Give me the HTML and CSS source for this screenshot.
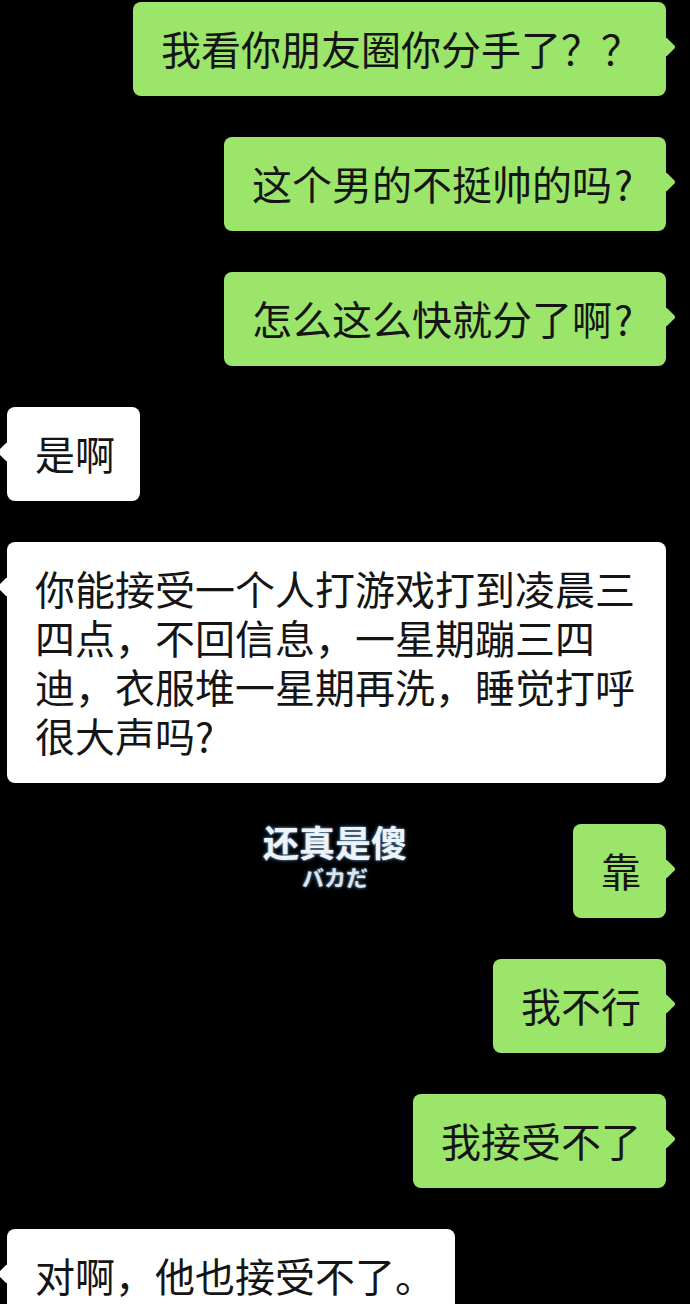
FILE: index.html
```html
<!DOCTYPE html>
<html>
<head>
  <meta charset="utf-8">
  <title>Chat</title>
  <link rel="stylesheet" href="styles.css">
</head>
<body>
  <div class="chat">
    <div class="row me">
      <div class="bubble green">我看你朋友圈你分手了？？</div>
    </div>
    <div class="row me">
      <div class="bubble green">这个男的不挺帅的吗<span class="q">?</span></div>
    </div>
    <div class="row me">
      <div class="bubble green">怎么这么快就分了啊<span class="q">?</span></div>
    </div>

    <div class="row them">
      <div class="bubble white">是啊</div>
    </div>
    <div class="row them">
      <div class="bubble white">你能接受一个人打游戏打到凌晨三四点，不回信息，一星期蹦三四迪，衣服堆一星期再洗，睡觉打呼很大声吗?</div>
    </div>

    <div class="row split">
      <div class="sticker">
        <span class="sticker-big">还真是傻</span>
        <span class="sticker-small">バカだ</span>
      </div>
      <div class="bubble green">靠</div>
    </div>
    <div class="row me">
      <div class="bubble green">我不行</div>
    </div>
    <div class="row me">
      <div class="bubble green">我接受不了</div>
    </div>

    <div class="row them">
      <div class="bubble white last">对啊，他也接受不了。</div>
    </div>
  </div>
</body>
</html>
```

FILE: styles.css
```css
body {
  margin: 0;
  background: #000;
  font-family: "Noto Sans CJK SC", "Noto Sans", sans-serif;
  overflow: hidden;
}

.chat {
  display: flex;
  flex-direction: column;
  gap: 41px;
  padding: 2px 24px 0 7px;
}

.row {
  display: flex;
}

.row.me {
  justify-content: flex-end;
}

.row.them {
  justify-content: flex-start;
}

.row.split {
  justify-content: space-between;
  align-items: flex-start;
}

.bubble {
  position: relative;
  font-size: 40px;
  line-height: 49px;
  padding: 22px 25px 23px 28px;
  border-radius: 8px;
  color: #151515;
  max-width: 610px;
}

.bubble .q {
  margin: 0 8px 0 2px;
}

.bubble.last {
  padding-right: 20px;
}

.green {
  background: #9be56b;
}

.white {
  background: #fff;
}

/* little tail */
.bubble::after {
  content: "";
  position: absolute;
  top: 38px;
  width: 14px;
  height: 14px;
  border-radius: 2px;
  transform: rotate(45deg);
}

.green::after {
  right: -7px;
  background: #9be56b;
}

.white::after {
  left: -7px;
  background: #fff;
}

.sticker {
  margin-left: 256px;
  display: flex;
  flex-direction: column;
  align-items: center;
  gap: 6px;
  color: #eef3f8;
  text-shadow: 0 0 2px #7fa6c8, 0 0 4px #3b5f80;
}

.sticker-big {
  font-size: 36px;
  font-weight: bold;
  line-height: 34px;
}

.sticker-small {
  font-size: 22px;
  line-height: 24px;
  font-weight: bold;
  color: #dfe4e8;
}
```
